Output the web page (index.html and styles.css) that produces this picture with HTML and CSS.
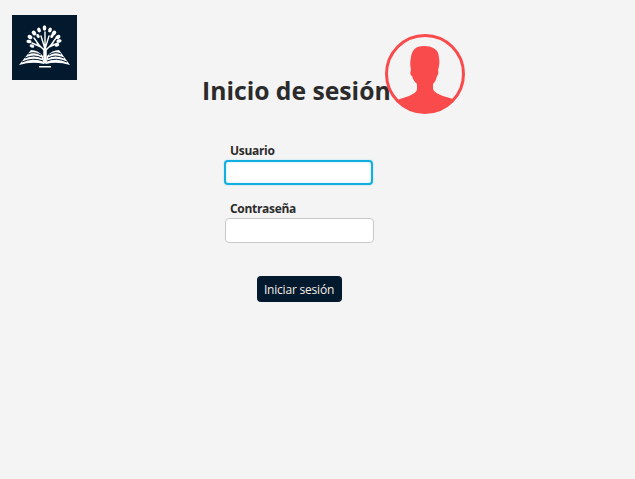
FILE: index.html
```html
<!DOCTYPE html>
<html lang="en">
<head>
    <meta charset="UTF-8">
    <meta name="viewport" content="width=device-width, initial-scale=1.0">
    <title>Inicio de sesión</title>
    <link rel="stylesheet" href="styles.css">
</head>
<body>
    <header class="top-bar">
        <svg class="logo" viewBox="0 0 65 65" role="img" aria-label="Logo">
            <rect width="65" height="65" fill="#03192e"/>
            <g fill="none" stroke="#fff" stroke-linecap="round">
                <path d="M33 47V34" stroke-width="3.500"/>
                <path d="M33 36 L25 28 M33 36 L41 28 M33 34 L29 21 M33 34 L37 21 M33 34 V17 M29 32 L20 28 M37 32 L46 28 M27 30 L22 23 M39 30 L44 23" stroke-width="1.400"/>
            </g>
            <g fill="#fff">
                <ellipse cx="32.500" cy="13" rx="1.800" ry="2.800"/>
                <ellipse cx="27" cy="15" rx="1.800" ry="2.500" transform="rotate(-20 27 15)"/>
                <ellipse cx="38" cy="15" rx="1.800" ry="2.500" transform="rotate(20 38 15)"/>
                <ellipse cx="22" cy="18" rx="2" ry="2.600" transform="rotate(-40 22 18)"/>
                <ellipse cx="42" cy="18" rx="2" ry="2.600" transform="rotate(40 42 18)"/>
                <ellipse cx="18" cy="22" rx="2" ry="2.600" transform="rotate(-60 18 22)"/>
                <ellipse cx="46" cy="22" rx="2" ry="2.600" transform="rotate(60 46 22)"/>
                <ellipse cx="17" cy="26.500" rx="1.800" ry="2.600" transform="rotate(-80 17 26.500)"/>
                <ellipse cx="47" cy="26" rx="1.800" ry="2.600" transform="rotate(80 47 26)"/>
                <ellipse cx="20" cy="31" rx="1.600" ry="2.400" transform="rotate(-70 20 31)"/>
                <ellipse cx="45" cy="30" rx="1.600" ry="2.400" transform="rotate(70 45 30)"/>
                <ellipse cx="26" cy="21" rx="1.500" ry="2.200" transform="rotate(-30 26 21)"/>
                <ellipse cx="40" cy="21" rx="1.500" ry="2.200" transform="rotate(30 40 21)"/>
                <path d="M7 50 L19 35 Q26 35 31 41 L32 49 Q20 46 7 50 Z"/>
                <path d="M58 50 L47 35 Q40 35 35 41 L34 49 Q45 46 58 50 Z"/>
                <rect x="27" y="51" width="12" height="1.500"/>
            </g>
            <g fill="none" stroke="#03192e" stroke-width="1">
                <path d="M10 47 Q21 42 31 46 M13 43 Q22 39 30 43 M16 39 Q22 36 29 40"/>
                <path d="M55 47 Q44 42 35 46 M52 43 Q43 39 36 43 M49 39 Q43 36 37 40"/>
            </g>
        </svg>
    </header>

    <main class="login">
        <div class="title-row">
            <h1>Inicio de sesión</h1>
            <svg class="avatar" viewBox="0 0 80 80" role="img" aria-label="Usuario">
                <defs>
                    <clipPath id="avatar-clip"><circle cx="40" cy="40" r="38"/></clipPath>
                </defs>
                <circle cx="40" cy="40" r="38.500" fill="none" stroke="#f94b4b" stroke-width="3"/>
                <path clip-path="url(#avatar-clip)" fill="#f94b4b" d="M39 12 C47 12 54 15 54 24 C55 28 54 33 53 36 C54 38 53 41 52 42 C51 46 50 48 48 50 L48 55 C49 58 53 60 58 62 L68 65 L72 80 L8 80 L12 66 L24 62 C28 60 32 58 32 55 L32 50 C30 48 28 46 27 42 C25 41 25 38 26 36 C25 32 25 27 26 23 C27 15 32 12 39 12 Z"/>
            </svg>
        </div>

        <form class="login-form">
            <label for="usuario">Usuario</label>
            <input type="text" id="usuario" class="is-focused">
            <label for="clave">Contraseña</label>
            <input type="password" id="clave">
            <button type="button">Iniciar sesión</button>
        </form>
    </main>
</body>
</html>
```

FILE: styles.css
```css
body {
    font-family: "Open Sans", "Noto Sans", sans-serif;
    background-color: #f4f4f4;
    color: #2b2b2b;
    margin: 0;
    padding: 0;
}

.top-bar {
    height: 59px;
    padding: 15px 12px 0;
}

.logo {
    display: block;
    width: 65px;
    height: 65px;
}

.login {
    width: 188px;
    margin-left: 202px;
}

.title-row {
    position: relative;
}

h1 {
    margin: 0;
    font-size: 24.7px;
    line-height: 34px;
    font-weight: 700;
    white-space: nowrap;
}

.avatar {
    position: absolute;
    left: 183px;
    top: -40px;
    width: 80px;
    height: 80px;
}

.login-form {
    display: flex;
    flex-direction: column;
    width: 150px;
    margin: 35px 0 0 23px;
}

label {
    margin-left: 5px;
    font-size: 12px;
    line-height: 16px;
    font-weight: 700;
    letter-spacing: -0.3px;
}

input {
    box-sizing: border-box;
    width: 149px;
    height: 25px;
    margin: 1px 0 16px;
    padding: 0 6px;
    background: white;
    border: 1px solid #c8c8c8;
    border-radius: 4px;
    outline: none;
}

input.is-focused {
    margin-left: -1px;
    border: 2px solid #12aee0;
    box-shadow: 0 0 2px rgba(18, 174, 224, 0.35), inset 0 0 3px rgba(18, 174, 224, 0.25);
}

button {
    align-self: center;
    width: 85px;
    height: 26px;
    margin-top: 17px;
    margin-left: -2px;
    padding: 0;
    background-color: #03192e;
    color: #f4efe6;
    border: none;
    border-radius: 4px;
    font-family: inherit;
    font-size: 12px;
    letter-spacing: -0.2px;
}
```
